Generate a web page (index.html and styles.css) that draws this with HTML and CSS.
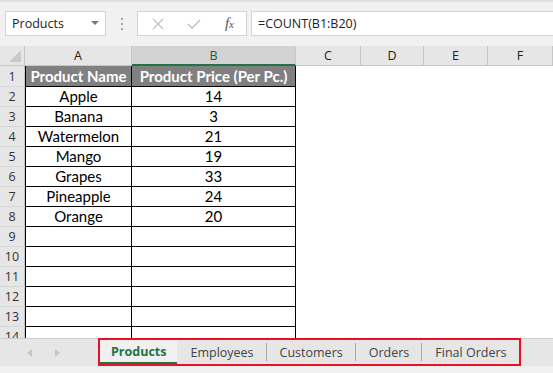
FILE: index.html
```html
<!DOCTYPE html>
<html lang="en">
<head>
    <meta charset="UTF-8">
    <meta name="viewport" content="width=device-width, initial-scale=1.0">
    <title>Products</title>
    <link rel="stylesheet" href="styles.css">
</head>
<body>
    <div class="toolbar">
        <div class="namebox">
            <span>Products</span>
            <svg class="drop" width="8" height="5" viewBox="0 0 8 5"><path d="M0 0 H8 L4 4 Z" fill="#7a7a7a"/></svg>
        </div>
        <div class="dots"><i></i><i></i><i></i></div>
        <div class="fbuttons">
            <svg width="12" height="12" viewBox="0 0 12 12"><path d="M1 1 L11 11 M11 1 L1 11" stroke="#c4c4c4" stroke-width="1.3" fill="none"/></svg>
            <svg width="14" height="12" viewBox="0 0 14 12"><path d="M1 6 L5 10 L13 2" stroke="#c4c4c4" stroke-width="1.6" fill="none"/></svg>
            <span class="fx">f<small>x</small></span>
        </div>
        <div class="formula">=COUNT(B1:B20)</div>
    </div>

    <div class="sheet">
        <div class="row head">
            <div class="rh corner"><svg width="12" height="12" viewBox="0 0 12 12"><path d="M12 0 V12 H0 Z" fill="#c9c9c9"/></svg></div>
            <div class="ch">A</div>
            <div class="ch sel">B</div>
            <div class="ch">C</div>
            <div class="ch">D</div>
            <div class="ch">E</div>
            <div class="ch">F</div>
        </div>
        <div class="row first">
            <div class="rh">1</div>
            <div class="c t a th">Product Name</div>
            <div class="c t th">Product Price (Per Pc.)</div>
            <div class="c"></div><div class="c"></div><div class="c"></div><div class="c"></div>
        </div>
        <div class="row"><div class="rh">2</div><div class="c t a">Apple</div><div class="c t">14</div><div class="c"></div><div class="c"></div><div class="c"></div><div class="c"></div></div>
        <div class="row"><div class="rh">3</div><div class="c t a">Banana</div><div class="c t">3</div><div class="c"></div><div class="c"></div><div class="c"></div><div class="c"></div></div>
        <div class="row"><div class="rh">4</div><div class="c t a">Watermelon</div><div class="c t">21</div><div class="c"></div><div class="c"></div><div class="c"></div><div class="c"></div></div>
        <div class="row"><div class="rh">5</div><div class="c t a">Mango</div><div class="c t">19</div><div class="c"></div><div class="c"></div><div class="c"></div><div class="c"></div></div>
        <div class="row"><div class="rh">6</div><div class="c t a">Grapes</div><div class="c t">33</div><div class="c"></div><div class="c"></div><div class="c"></div><div class="c"></div></div>
        <div class="row"><div class="rh">7</div><div class="c t a">Pineapple</div><div class="c t">24</div><div class="c"></div><div class="c"></div><div class="c"></div><div class="c"></div></div>
        <div class="row"><div class="rh">8</div><div class="c t a">Orange</div><div class="c t">20</div><div class="c"></div><div class="c"></div><div class="c"></div><div class="c"></div></div>
        <div class="row"><div class="rh">9</div><div class="c t a"></div><div class="c t"></div><div class="c"></div><div class="c"></div><div class="c"></div><div class="c"></div></div>
        <div class="row"><div class="rh">10</div><div class="c t a"></div><div class="c t"></div><div class="c"></div><div class="c"></div><div class="c"></div><div class="c"></div></div>
        <div class="row"><div class="rh">11</div><div class="c t a"></div><div class="c t"></div><div class="c"></div><div class="c"></div><div class="c"></div><div class="c"></div></div>
        <div class="row"><div class="rh">12</div><div class="c t a"></div><div class="c t"></div><div class="c"></div><div class="c"></div><div class="c"></div><div class="c"></div></div>
        <div class="row"><div class="rh">13</div><div class="c t a"></div><div class="c t"></div><div class="c"></div><div class="c"></div><div class="c"></div><div class="c"></div></div>
        <div class="row"><div class="rh">14</div><div class="c t a"></div><div class="c t"></div><div class="c"></div><div class="c"></div><div class="c"></div><div class="c"></div></div>
    </div>

    <div class="tabbar">
        <div class="arrows">
            <svg width="5" height="8" viewBox="0 0 5 8"><path d="M5 0 V8 L0 4 Z" fill="#c6c6c6"/></svg>
            <svg width="5" height="8" viewBox="0 0 5 8"><path d="M0 0 V8 L5 4 Z" fill="#c6c6c6"/></svg>
        </div>
        <div class="tabs">
            <div class="tab active">Products</div>
            <div class="tab">Employees</div>
            <div class="tab">Customers</div>
            <div class="tab">Orders</div>
            <div class="tab last">Final Orders</div>
        </div>
    </div>
    <div class="status"></div>
</body>
</html>
```

FILE: styles.css
```css
    body {
        margin: 0;
        width: 553px;
        height: 373px;
        overflow: hidden;
        background-color: #f0f0f0;
        font-family: "Open Sans", sans-serif;
    }

    /* formula bar */
    .toolbar {
        height: 46px;
        box-sizing: border-box;
        padding-top: 11px;
        display: flex;
        align-items: flex-start;
        background: linear-gradient(#d9d9d9, #f1f1f1 3px, #f1f1f1);
    }

    .namebox {
        margin-left: 5px;
        width: 101px;
        height: 25px;
        box-sizing: border-box;
        border: 1px solid #d4d4d4;
        background-color: white;
        display: flex;
        align-items: center;
        justify-content: space-between;
        padding: 0 6px 0 6px;
        font-size: 12.5px;
        color: #222;
    }

    .dots {
        width: 31px;
        height: 25px;
        display: flex;
        flex-direction: column;
        align-items: center;
        justify-content: center;
        gap: 3px;
    }

    .dots i {
        width: 2px;
        height: 2px;
        background-color: #a8a8a8;
    }

    .fbuttons {
        width: 110px;
        height: 25px;
        box-sizing: border-box;
        border: 1px solid #d4d4d4;
        background-color: white;
        display: flex;
        align-items: center;
        justify-content: space-between;
        padding: 0 12px 0 14px;
    }

    .fx {
        font-family: "Liberation Serif", serif;
        font-style: italic;
        font-size: 15px;
        color: #555;
    }

    .fx small {
        font-size: 11px;
    }

    .formula {
        margin-left: 4px;
        flex: 1;
        height: 25px;
        box-sizing: border-box;
        border: 1px solid #d4d4d4;
        border-right: none;
        background-color: white;
        padding-left: 6px;
        line-height: 23px;
        font-size: 12.5px;
        color: #222;
    }

    /* grid */
    .sheet {
        height: 292px;
        overflow: hidden;
        background-color: white;
    }

    .row {
        display: grid;
        grid-template-columns: 25px 107px 164px 65px 63px 64px 1fr;
        height: 20px;
    }

    .row.head {
        height: 20px;
    }

    .row.first {
        height: 21px;
    }

    .rh {
        background-color: #e6e6e6;
        border-right: 1px solid #c6c6c6;
        border-bottom: 1px solid #d6d6d6;
        box-sizing: border-box;
        display: flex;
        align-items: center;
        justify-content: center;
        font-size: 12.5px;
        color: #333;
    }

    .corner {
        justify-content: flex-end;
        align-items: flex-end;
        padding: 0 3px 3px 0;
        border-bottom: 1px solid #c6c6c6;
    }

    .ch {
        background-color: #e6e6e6;
        border-right: 1px solid #c6c6c6;
        border-bottom: 1px solid #c6c6c6;
        box-sizing: border-box;
        display: flex;
        align-items: center;
        justify-content: center;
        font-size: 12.5px;
        color: #222;
    }

    .ch.sel {
        background-color: #d2d2d2;
        border-bottom: 2px solid #217346;
        color: #1f5c3a;
    }

    .c {
        box-sizing: border-box;
    }

    .c.t {
        border-right: 1px solid black;
        border-bottom: 1px solid black;
        display: flex;
        align-items: flex-end;
        justify-content: center;
        padding-bottom: 1px;
        font-family: Lato, "Liberation Sans", sans-serif;
        font-size: 15px;
        line-height: 18px;
        color: black;
    }

    .c.a {
        border-left: 1px solid black;
    }

    .c.th {
        background-color: #808080;
        color: white;
        font-weight: bold;
    }

    /* sheet tabs */
    .tabbar {
        height: 28px;
        box-sizing: border-box;
        border-top: 1px solid #cfcfcf;
        background-color: #e6e6e6;
        display: flex;
    }

    .arrows {
        width: 98px;
        display: flex;
        align-items: center;
        gap: 23px;
        padding-left: 27px;
        box-sizing: border-box;
    }

    .tabs {
        display: flex;
        height: 28px;
        margin-top: -1px;
        box-sizing: border-box;
        border: 2px solid #e81123;
    }

    .tab {
        padding: 0 13px;
        display: flex;
        align-items: center;
        font-size: 12.5px;
        color: #444;
        position: relative;
    }

    .tab::after {
        content: "";
        position: absolute;
        right: 0;
        top: 3px;
        bottom: 3px;
        width: 1px;
        background-color: #a6a6a6;
    }

    .tab.last::after {
        display: none;
    }

    .tab.active {
        font-weight: bold;
        color: #217346;
        padding: 0 11px;
        background-color: #f0f0f0;
        border-bottom: 2px solid #217346;
    }

    .tab.active::after {
        display: none;
    }

    .status {
        height: 7px;
        background-color: #f0f0f0;
    }
```
